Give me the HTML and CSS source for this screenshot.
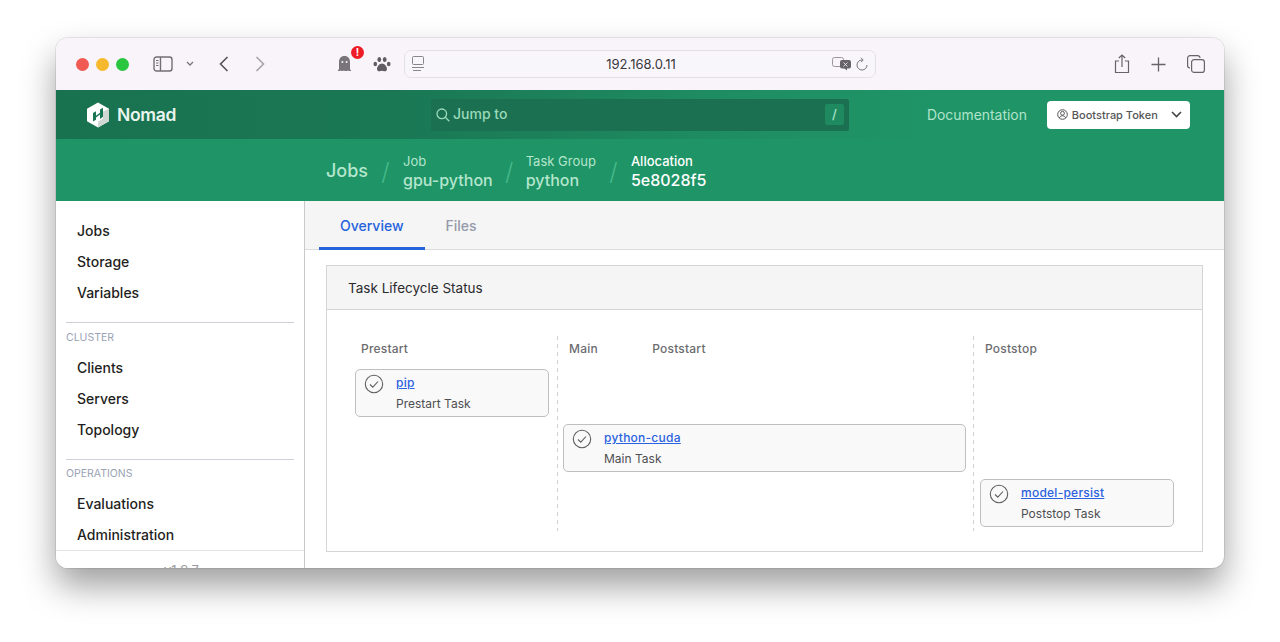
FILE: index.html
```html
<!DOCTYPE html>
<html lang="en">
<head>
    <meta charset="UTF-8">
    <meta name="viewport" content="width=device-width, initial-scale=1.0">
    <title>Nomad</title>
    <link rel="stylesheet" href="styles.css">
</head>
<body>
<div class="window">
    <!-- browser chrome -->
    <div class="titlebar">
        <div class="lights">
            <span class="light red"></span>
            <span class="light yellow"></span>
            <span class="light green"></span>
        </div>
        <svg class="sidebar-icon" width="20" height="16" viewBox="0 0 20 16" fill="none" stroke="#716e75" stroke-width="1.400">
            <rect x="1" y="1" width="18" height="14" rx="2.500"/>
            <path d="M7.500 1v14"/>
            <path d="M3 4.500h2.500M3 7h2.500M3 9.500h2.500" stroke-width="1"/>
        </svg>
        <svg class="small-chevron" width="8" height="6" viewBox="0 0 8 6" fill="none" stroke="#77747c" stroke-width="1.300"><path d="M1 1l3 3 3-3"/></svg>
        <svg class="back" width="10" height="16" viewBox="0 0 10 16" fill="none" stroke="#55525a" stroke-width="1.600"><path d="M8.500 1L1.500 8l7 7"/></svg>
        <svg class="forward" width="10" height="16" viewBox="0 0 10 16" fill="none" stroke="#a5a2aa" stroke-width="1.600"><path d="M1.500 1l7 7-7 7"/></svg>

        <div class="ghost">
            <svg width="15" height="18" viewBox="0 0 15 18" fill="#77757b">
                <path d="M7.500 1C3.800 1 2 3.700 2 7v6c0 1.200-.6 2.300-1.500 3 1.300.3 2.500 0 3.300-.6.800.7 2.200.8 3.200.1 1 .8 2.700.7 3.700-.1.900.6 2.400.9 3.800.6-.9-.7-1.500-1.800-1.500-3V7c0-3.300-1.800-6-5.500-6z"/>
                <circle cx="5.400" cy="7" r="1" fill="#f8f4fa"/>
                <circle cx="9.600" cy="7" r="1" fill="#f8f4fa"/>
            </svg>
            <span class="badge">!</span>
        </div>
        <svg class="paw" width="18" height="17" viewBox="0 0 18 17" fill="#5f5d63">
            <ellipse cx="6.300" cy="3.500" rx="1.900" ry="2.600"/>
            <ellipse cx="11.700" cy="3.500" rx="1.900" ry="2.600"/>
            <ellipse cx="2.300" cy="8" rx="1.800" ry="2.300"/>
            <ellipse cx="15.700" cy="8" rx="1.800" ry="2.300"/>
            <path d="M9 7.500c-2.500 0-5 3-5 5.500 0 1.800 1.500 2.500 2.800 2.200.8-.2 1.500-.4 2.200-.4s1.400.2 2.200.4c1.300.3 2.800-.4 2.800-2.200 0-2.500-2.500-5.500-5-5.500z"/>
        </svg>

        <div class="urlbar">
            <svg class="reader" width="12" height="16" viewBox="0 0 12 16" fill="none" stroke="#88858c" stroke-width="1"><rect x=".5" y=".5" width="11" height="8" rx="1"/><path d="M0 11.500h12M1 14.500h8"/></svg>
            <span class="url">192.168.0.11</span>
            <svg class="translate" width="20" height="14" viewBox="0 0 20 14">
                <rect x=".5" y=".5" width="11" height="9" rx="2" fill="#f8f4fa" stroke="#99969d"/>
                <rect x="8" y="3" width="11" height="8.500" rx="2" fill="#66646a"/>
                <path d="M12 11l3 2.500V11z" fill="#66646a"/>
                <path d="M11.500 5.500l4 4M15.500 5.500l-4 4" stroke="#f8f4fa" stroke-width=".8"/>
            </svg>
            <svg class="reload" width="12" height="14" viewBox="0 0 12 14" fill="none" stroke="#77747c" stroke-width="1"><path d="M6 3a5 5 0 1 0 5 5"/><path d="M5 .8L7.200 3 5 5.200"/></svg>
        </div>

        <div class="chrome-actions">
            <svg width="16" height="20" viewBox="0 0 16 20" fill="none" stroke="#66636a" stroke-width="1.200"><path d="M5 7H1.500v11.500h13V7H11"/><path d="M8 13V1M4.800 4L8 1l3.200 3"/></svg>
            <svg width="15" height="15" viewBox="0 0 15 15" fill="none" stroke="#66636a" stroke-width="1.300"><path d="M7.500 .5v14M.5 7.500h14"/></svg>
            <svg width="18" height="18" viewBox="0 0 18 18" fill="none" stroke="#66636a" stroke-width="1.200"><rect x="4.600" y="4.600" width="12.800" height="12.800" rx="2.500"/><path d="M3 13A2.400 2.400 0 0 1 .6 10.600V3A2.400 2.400 0 0 1 3 .6h7.500A2.400 2.400 0 0 1 13 3"/></svg>
        </div>
    </div>

    <!-- nomad nav -->
    <div class="topnav">
        <div class="brand">
            <svg width="24" height="26" viewBox="0 0 24 26">
                <path d="M12 .5L23 6.800v12.400L12 25.500 1 19.200V6.800z" fill="#fff"/>
                <path d="M23 6.800v12.400L12 25.500v-6l5-2.800V9.500z" fill="#cfd8d3"/>
                <path d="M7 19.500V11l3-1.700v4.500l4-3V7.500l3-1.700v9L14 17v-4.500l-4 3v2.300z" fill="#1a7553"/>
            </svg>
            <span class="brand-name">Nomad</span>
        </div>
        <div class="nav-main">
            <div class="search">
                <svg width="14" height="14" viewBox="0 0 14 14" fill="none" stroke="#9ad9bb" stroke-width="1.300"><circle cx="5.800" cy="5.800" r="4.800"/><path d="M9.300 9.300l4 4"/></svg>
                <span class="search-text">Jump to</span>
                <span class="key">/</span>
            </div>
            <a class="doc-link">Documentation</a>
            <div class="token">
                <svg width="11" height="11" viewBox="0 0 11 11" fill="none" stroke="#555" stroke-width="1"><circle cx="5.500" cy="5.500" r="4.800"/><circle cx="5.500" cy="4.300" r="1.900"/><path d="M2.300 8.900c.8-1.500 1.900-2.100 3.200-2.100s2.400.6 3.200 2.100"/></svg>
                <span>Bootstrap Token</span>
                <svg class="token-chevron" width="11" height="7" viewBox="0 0 11 7" fill="none" stroke="#444" stroke-width="1.600"><path d="M1 1l4.500 4.500L10 1"/></svg>
            </div>
        </div>
    </div>

    <!-- breadcrumbs -->
    <div class="crumbs">
        <span class="crumb-top">Jobs</span>
        <span class="slash">/</span>
        <div class="crumb"><span class="crumb-label">Job</span><span class="crumb-value">gpu-python</span></div>
        <span class="slash slash-mid">/</span>
        <div class="crumb"><span class="crumb-label">Task Group</span><span class="crumb-value">python</span></div>
        <span class="slash">/</span>
        <div class="crumb current"><span class="crumb-label">Allocation</span><span class="crumb-value">5e8028f5</span></div>
    </div>

    <div class="body">
        <div class="sidebar">
            <ul class="menu">
                <li>Jobs</li>
                <li>Storage</li>
                <li>Variables</li>
            </ul>
            <div class="menu-label">CLUSTER</div>
            <ul class="menu">
                <li>Clients</li>
                <li>Servers</li>
                <li>Topology</li>
            </ul>
            <div class="menu-label ops">OPERATIONS</div>
            <ul class="menu">
                <li>Evaluations</li>
                <li>Administration</li>
            </ul>
            <div class="version">v1.9.7</div>
        </div>

        <div class="content">
            <div class="tabs">
                <div class="tab active">Overview</div>
                <div class="tab">Files</div>
            </div>
            <div class="panel">
                <div class="panel-head">Task Lifecycle Status</div>
                <div class="lifecycle">
                    <div class="phases">
                        <div class="phase">Prestart</div>
                        <div class="phase">Main <span class="poststart">Poststart</span></div>
                        <div class="phase">Poststop</div>
                    </div>
                    <div class="task task-pre">
                        <svg class="check" width="20" height="20" viewBox="0 0 20 20" fill="none" stroke="#5f5f5f" stroke-width="1.100"><circle cx="10" cy="10" r="8.700"/><path d="M6 10.500l2.800 2.700L14 7.500"/></svg>
                        <div><a class="task-name">pip</a><div class="task-type">Prestart Task</div></div>
                    </div>
                    <div class="task task-main">
                        <svg class="check" width="20" height="20" viewBox="0 0 20 20" fill="none" stroke="#5f5f5f" stroke-width="1.100"><circle cx="10" cy="10" r="8.700"/><path d="M6 10.500l2.800 2.700L14 7.500"/></svg>
                        <div><a class="task-name">python-cuda</a><div class="task-type">Main Task</div></div>
                    </div>
                    <div class="task task-stop">
                        <svg class="check" width="20" height="20" viewBox="0 0 20 20" fill="none" stroke="#5f5f5f" stroke-width="1.100"><circle cx="10" cy="10" r="8.700"/><path d="M6 10.500l2.800 2.700L14 7.500"/></svg>
                        <div><a class="task-name">model-persist</a><div class="task-type">Poststop Task</div></div>
                    </div>
                </div>
            </div>
        </div>
    </div>
</div>
</body>
</html>
```
FILE: styles.css
```css
* {
    margin: 0;
    padding: 0;
    box-sizing: border-box;
    font-family: "Inter", "Liberation Sans", sans-serif;
}

html, body {
    height: 100%;
    overflow: hidden;
    background: #fff;
}

.window {
    width: 1168px;
    height: 530px;
    margin: 38px 0 0 56px;
    border-radius: 12px;
    overflow: hidden;
    display: flex;
    flex-direction: column;
    background: #fff;
    box-shadow: 0 0 0 1px rgba(0, 0, 0, 0.08), 0 18px 34px rgba(0, 0, 0, 0.38);
}

/* browser chrome */
.titlebar {
    height: 52px;
    flex: none;
    display: flex;
    align-items: center;
    background: #f8f4fa;
    padding-left: 20px;
}

.lights {
    display: flex;
    gap: 7px;
}

.light {
    width: 13px;
    height: 13px;
    border-radius: 50%;
}

.light.red { background: #f15a52; }
.light.yellow { background: #f6b82c; }
.light.green { background: #2ac640; }

.sidebar-icon { margin-left: 24px; }
.small-chevron { margin-left: 13px; }
.back { margin-left: 25px; }
.forward { margin-left: 26px; }

.ghost {
    position: relative;
    margin-left: 72px;
    width: 15px;
    height: 18px;
}

.badge {
    position: absolute;
    top: -9px;
    left: 14px;
    width: 13px;
    height: 13px;
    border-radius: 50%;
    background: #ee1c25;
    color: #fff;
    font-size: 10px;
    font-weight: 700;
    line-height: 13px;
    text-align: center;
}

.paw { margin-left: 21px; }

.urlbar {
    margin-left: 13px;
    width: 472px;
    height: 28px;
    display: flex;
    align-items: center;
    padding: 0 7px;
    border: 1px solid #e4e0e8;
    border-radius: 7px;
    background: #f9f6fb;
}

.url {
    flex: 1;
    text-align: center;
    font-size: 13px;
    color: #3a383c;
    padding-left: 26px;
}

.reload { margin-left: 4px; }

.chrome-actions {
    margin-left: auto;
    margin-right: 19px;
    display: flex;
    align-items: center;
    gap: 21px;
}

/* nomad nav */
.topnav {
    height: 49px;
    flex: none;
    display: flex;
    background: linear-gradient(90deg, #19724f 0, #1a7855 30%, #1f8f63 60%, #1f9466 75%);
}

.brand {
    width: 249px;
    flex: none;
    display: flex;
    align-items: center;
    gap: 7px;
    padding-left: 30px;
}

.brand-name {
    color: #eaf5ef;
    font-size: 17.500px;
    font-weight: 600;
    letter-spacing: -0.3px;
}

.nav-main {
    flex: 1;
    display: flex;
    align-items: center;
    padding-left: 126px;
}

.search {
    width: 418px;
    height: 32px;
    display: flex;
    align-items: center;
    gap: 3px;
    padding: 0 5px;
    background: #1a7050;
    border-radius: 2px;
}

.search-text {
    flex: 1;
    color: #9ad9bb;
    font-size: 14px;
    font-weight: 500;
    padding-bottom: 2px;
}

.key {
    width: 19px;
    height: 21px;
    background: #1f8a5f;
    color: #a8e4c8;
    font-size: 13px;
    font-weight: 500;
    line-height: 21px;
    text-align: center;
    border-radius: 2px;
}

.doc-link {
    margin-left: 78px;
    color: #b0e4ca;
    font-size: 13.900px;
}

.token {
    margin-left: 20px;
    width: 143px;
    height: 28px;
    display: flex;
    align-items: center;
    gap: 4px;
    padding-left: 10px;
    background: #fff;
    border-radius: 4px;
    color: #555;
    font-size: 11px;
    font-weight: 500;
}

.token-chevron { margin-left: 9px; }

/* breadcrumbs */
.crumbs {
    height: 62px;
    flex: none;
    display: flex;
    align-items: center;
    padding-left: 270px;
    background: #1f9466;
}

.crumb-top {
    color: #b4e6cd;
    font-size: 18px;
    font-weight: 500;
}

.slash {
    width: 35px;
    text-align: center;
    color: #46b98a;
    font-size: 24px;
    font-weight: 300;
    padding-top: 2px;
}

.slash-mid {
    width: 33px;
}

.crumb {
    display: flex;
    flex-direction: column;
    color: #b4e6cd;
    padding-top: 3px;
}

.crumb-label {
    font-size: 13px;
    line-height: 17px;
}

.crumb-value {
    font-size: 16px;
    font-weight: 500;
    line-height: 20px;
}

.crumb.current { color: #fff; }
.crumb.current .crumb-label { font-weight: 500; }

.body {
    flex: 1;
    display: flex;
    min-height: 0;
}

/* sidebar */
.sidebar {
    position: relative;
    width: 249px;
    flex: none;
    padding: 14px 10px 0;
    border-right: 1px solid #c9c9cc;
    overflow: hidden;
    background: #fff;
}

.menu {
    list-style: none;
}

.menu li {
    height: 31px;
    padding-left: 11px;
    color: #1f1f22;
    font-size: 14px;
    font-weight: 500;
    line-height: 31px;
}

.menu-label {
    margin-top: 14px;
    height: 30px;
    padding-top: 8px;
    border-top: 1px solid #cfd1d8;
    color: #9aa3b5;
    font-size: 10.500px;
    line-height: 14px;
}

.menu-label.ops {
    height: 29px;
    padding-top: 7px;
}

.version {
    position: absolute;
    left: 0;
    right: 0;
    top: 349px;
    height: 40px;
    padding-top: 11px;
    padding-left: 3px;
    border-top: 1px solid #e2e2e4;
    background: #fff;
    color: #9a9a9e;
    font-size: 13px;
    text-align: center;
}

/* content */
.content {
    flex: 1;
    min-width: 0;
}

.tabs {
    height: 49px;
    display: flex;
    padding-left: 14px;
    background: #f5f5f5;
    border-bottom: 1px solid #dcdcdc;
}

.tab {
    height: 49px;
    padding: 0 21px;
    color: #949aaa;
    font-size: 14px;
    font-weight: 500;
    line-height: 50px;
}

.tab.active {
    color: #2563dc;
    border-bottom: 3px solid #2563dc;
}

.panel {
    margin: 15px 21px 0 21px;
    height: 287px;
    border: 1px solid #d5d5d5;
}

.panel-head {
    height: 44px;
    padding-left: 21px;
    background: #f5f5f5;
    border-bottom: 1px solid #d5d5d5;
    color: #2b2b2d;
    font-size: 13.500px;
    line-height: 44px;
}

.lifecycle {
    margin: 26px 0 0 22px;
    width: 833px;
    height: 195px;
    display: grid;
    grid-template-columns: 208px 416px 209px;
    grid-template-rows: 26px 48px 48px 48px;
    row-gap: 7px;
    background:
        repeating-linear-gradient(#d0d0d0 0 4px, transparent 4px 8px) 208px 0 / 1px 100% no-repeat,
        repeating-linear-gradient(#d0d0d0 0 4px, transparent 4px 8px) 624px 0 / 1px 100% no-repeat;
}

.phases {
    grid-column: 1 / 4;
    display: grid;
    grid-template-columns: 208px 416px 209px;
}

.phase {
    padding: 5px 0 0 12px;
    color: #6c6c70;
    font-size: 12px;
    font-weight: 500;
    letter-spacing: 0.2px;
}

.poststart {
    margin-left: 51px;
}

.task {
    display: flex;
    gap: 12px;
    padding: 3px 8px;
    background: #f9f9f9;
    border: 1px solid #bfbfc2;
    border-radius: 5px;
}

.task-pre {
    grid-column: 1;
    grid-row: 2;
    margin: 0 8px 0 6px;
}

.task-main {
    grid-column: 2;
    grid-row: 3;
    margin: 0 7px 0 6px;
}

.task-stop {
    grid-column: 3;
    grid-row: 4;
    margin: 0 8px 0 7px;
}

.check {
    flex: none;
    margin-top: 1px;
}

.task-name {
    display: block;
    color: #2a62e0;
    font-size: 12px;
    font-weight: 500;
    letter-spacing: 0.25px;
    line-height: 19px;
    text-decoration: underline;
}

.task-type {
    margin-top: 3px;
    color: #4e4e52;
    font-size: 12px;
    line-height: 17px;
}
```
